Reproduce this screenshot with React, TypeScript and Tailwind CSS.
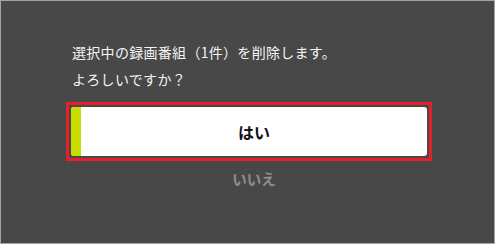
export default function App() {
  return (
    <div
      className="w-[495px] h-[244px] bg-[#484848] border border-[#a3a3a3] flex flex-col"
      style={{ fontFamily: '"Noto Sans CJK JP", "Noto Sans", sans-serif' }}
    >
      <div className="ml-[71px] mt-[38px] text-[14px] leading-[27px] tracking-[0.3px] text-[#f4f4f4]">
        <p>選択中の録画番組（1件）を削除します。</p>
        <p>よろしいですか？</p>
      </div>

      <div className="ml-[65px] mt-[9px] w-[366px] flex flex-col">
        <div className="border-[3px] border-[#e5202a] p-[2px]">
          <button className="w-full h-[49px] flex rounded-[3px] overflow-hidden bg-white">
            <span className="w-[10px] h-full bg-[#c8dc00]" />
            <span className="flex-1 flex items-center justify-center text-[16px] font-bold text-[#111]">
              はい
            </span>
          </button>
        </div>
        <div className="mt-[4px] pl-[15px] pr-[5px] text-center text-[14.5px] leading-[28px] font-bold text-[#8e8e8e]">
          いいえ
        </div>
      </div>
    </div>
  );
}
